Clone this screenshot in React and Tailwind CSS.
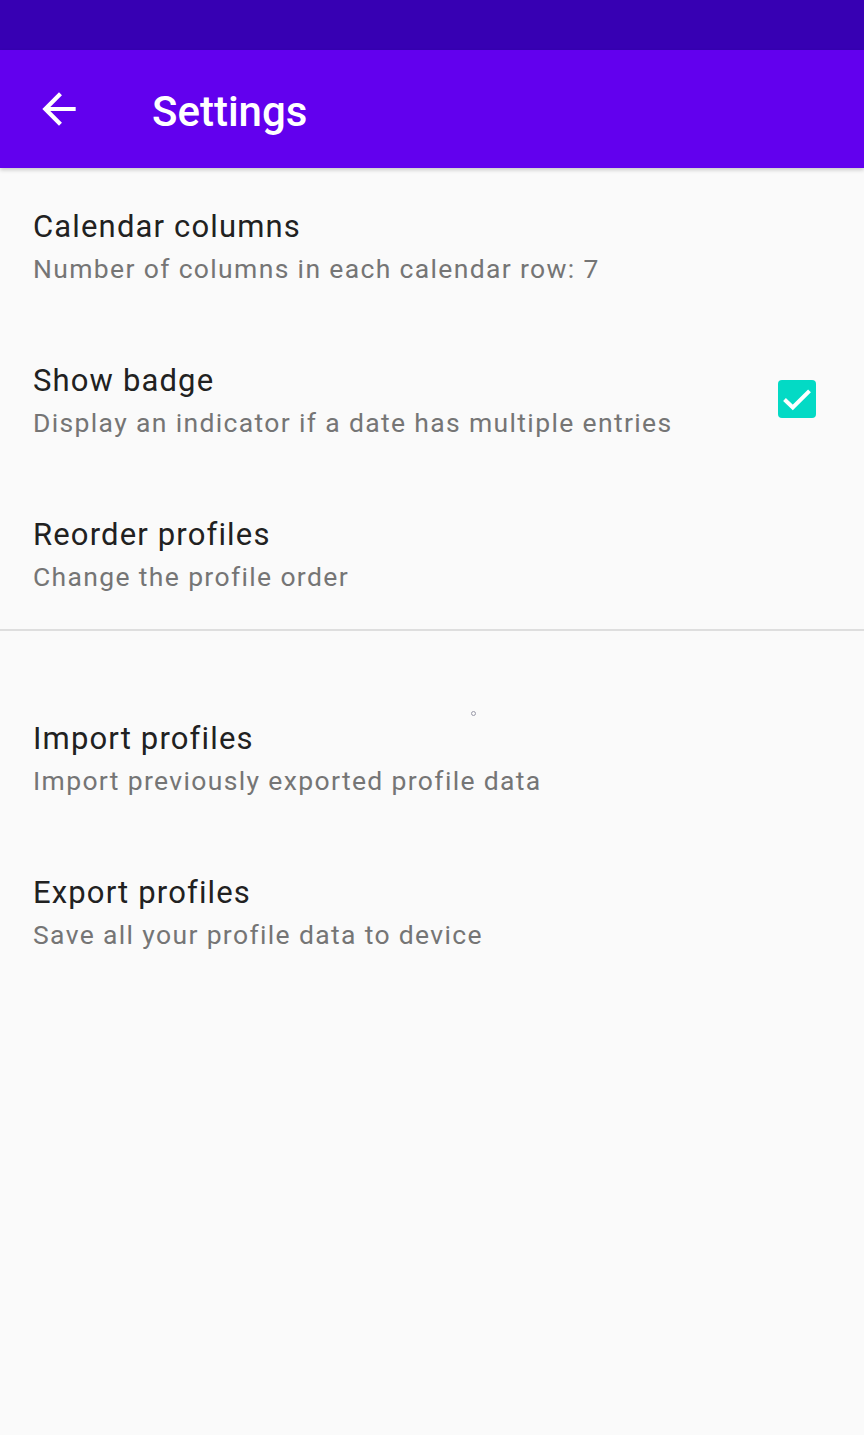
import React, { useState } from 'react';

const font = { fontFamily: 'Roboto, "Noto Sans", sans-serif' };

const PrefRow = ({ title, summary, checked, onToggle, h = 'h-[154px]' }) => (
  <div className={`${h} flex items-start justify-between pl-[33px] pr-[48px] pt-[41px]`}>
    <div className="min-w-0">
      <p className="text-[31px] leading-[36px] tracking-[1.15px] text-[#212121]">{title}</p>
      <p className="mt-[7px] text-[26.5px] leading-[34px] tracking-[1.35px] text-[#757575]">{summary}</p>
    </div>
    {checked !== undefined && (
      <button onClick={onToggle} className="self-center -mt-[41px] flex-shrink-0">
        {checked ? (
          <svg width="38" height="38" viewBox="0 0 38 38">
            <rect x="0" y="0" width="38" height="38" rx="4" fill="#03DAC5" />
            <polyline points="6.5,19.5 14.8,27.5 31.5,10.8" fill="none" stroke="#fff" strokeWidth="4" />
          </svg>
        ) : (
          <div className="w-[38px] h-[38px] rounded-[4px] border-[4px] border-[#757575]" />
        )}
      </button>
    )}
  </div>
);

export default function App() {
  const [badge, setBadge] = useState(true);

  return (
    <div className="relative w-[864px] h-[1435px] bg-[#fafafa] overflow-hidden" style={font}>
      {/* status bar */}
      <div className="h-[50px] bg-[#3700b3]" />

      {/* toolbar */}
      <div className="relative z-10 h-[118px] bg-[#6200ee] flex items-center shadow-[0_2px_4px_rgba(0,0,0,0.2)]">
        <button className="w-[50px] h-[50px] ml-[34px] flex items-center justify-center">
          <svg width="50" height="50" viewBox="0 0 24 24" fill="#fff">
            <path d="M20 11H7.83l5.59-5.59L12 4l-8 8 8 8 1.41-1.41L7.83 13H20v-2z" />
          </svg>
        </button>
        <h1 className="ml-[68px] translate-y-[3px] text-[42px] font-medium text-white leading-none">Settings</h1>
      </div>

      <PrefRow title="Calendar columns" summary="Number of columns in each calendar row: 7" />
      <PrefRow
        title="Show badge"
        summary="Display an indicator if a date has multiple entries"
        checked={badge}
        onToggle={() => setBadge(!badge)}
      />
      <PrefRow title="Reorder profiles" summary="Change the profile order" h="h-[153px]" />

      <div className="h-[2px] bg-[#dedede]" />
      <div className="h-[49px]" />

      <PrefRow title="Import profiles" summary="Import previously exported profile data" />
      <PrefRow title="Export profiles" summary="Save all your profile data to device" />

      {/* stray ripple dot */}
      <div className="absolute left-[471px] top-[711px] w-[5px] h-[5px] rounded-full border border-[#9a9aa8]" />
    </div>
  );
}
